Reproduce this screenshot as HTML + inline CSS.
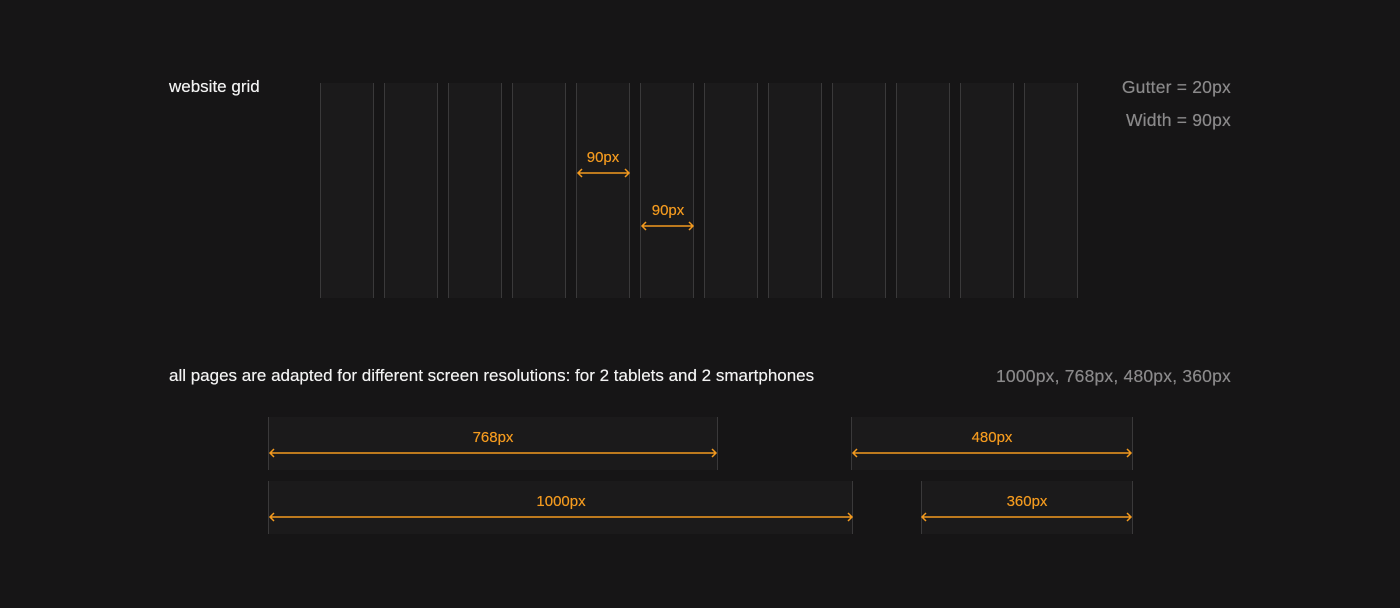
<!DOCTYPE html><html><head><style>
body{margin:0;width:1400px;height:608px;background:#161516;font-family:"Liberation Sans",sans-serif;position:relative;overflow:hidden}
.t{position:absolute;font-size:17px;line-height:20px;white-space:nowrap;text-shadow:0 0 0.4px currentColor}
.w{color:#f2f2f2}.g{color:#8a898a;text-align:right;font-size:17.5px;letter-spacing:0.2px}
.o{color:#f39a1f;font-size:15px;position:absolute;line-height:16px;text-align:center;text-shadow:0 0 0.4px currentColor}
.col{position:absolute;top:83px;height:215px;background:#1b1a1b;border-left:1px solid #3a393a;border-right:1px solid #3a393a;box-sizing:border-box}
.box{position:absolute;background:#1b1a1b;border-left:1px solid #3a393a;border-right:1px solid #3a393a;box-sizing:border-box}
</style></head><body>
<div class="t w" style="left:169px;top:77px">website grid</div>
<div class="t g" style="right:169px;top:77px">Gutter = 20px</div>
<div class="t g" style="right:169px;top:110px">Width = 90px</div>
<div class="t w" style="left:169px;top:366px">all pages are adapted for different screen resolutions: for 2 tablets and 2 smartphones</div>
<div class="t g" style="right:169px;top:366px">1000px, 768px, 480px, 360px</div>
<div id="cols"></div>
<script>
var h='';for(var i=0;i<12;i++){h+='<div class="col" style="left:'+(320+i*64)+'px;width:54px"></div>'}
document.getElementById('cols').innerHTML=h;
</script>
<div class="box" style="left:268px;top:417px;width:450px;height:53px"></div>
<div class="box" style="left:851px;top:417px;width:282px;height:53px"></div>
<div class="box" style="left:268px;top:481px;width:585px;height:53px"></div>
<div class="box" style="left:921px;top:481px;width:212px;height:53px"></div>
<svg width="1400" height="608" style="position:absolute;left:0;top:0" fill="none" stroke="#f39a1f" stroke-width="1.5">
<path d="M578 173H629M582 169L578 173L582 177M625 169L629 173L625 177"/>
<path d="M642 226H693M646 222L642 226L646 230M689 222L693 226L689 230"/>
<path d="M270 453H716M274 449L270 453L274 457M712 449L716 453L712 457"/>
<path d="M853 453H1131M857 449L853 453L857 457M1127 449L1131 453L1127 457"/>
<path d="M270 517H852M274 513L270 517L274 521M848 513L852 517L848 521"/>
<path d="M922 517H1131M926 513L922 517L926 521M1127 513L1131 517L1127 521"/>
</svg>
<div class="o" style="left:563px;top:150px;width:80px">90px</div>
<div class="o" style="left:628px;top:203px;width:80px">90px</div>
<div class="o" style="left:453px;top:430px;width:80px">768px</div>
<div class="o" style="left:952px;top:430px;width:80px">480px</div>
<div class="o" style="left:521px;top:494px;width:80px">1000px</div>
<div class="o" style="left:987px;top:494px;width:80px">360px</div>
</body></html>
